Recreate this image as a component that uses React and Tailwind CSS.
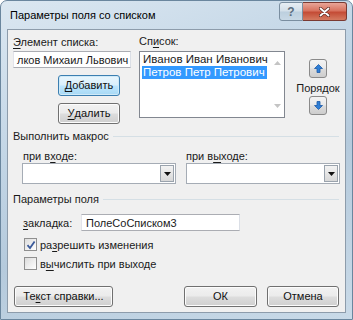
import React from "react";

const font = { fontFamily: '"Liberation Sans", Arial, sans-serif' };

function Btn({ children, className = "", focused = false }) {
  return (
    <div
      className={
        "flex items-center justify-center rounded-[3px] border text-[11px] leading-none text-[#111] " +
        (focused
          ? "border-[#3c7fb1] bg-[linear-gradient(#eaf6fd_0%,#d9f0fc_48%,#bee6fd_52%,#a7d9f5_100%)] shadow-[inset_0_0_0_1px_#cfeaf8] "
          : "border-[#707070] bg-[linear-gradient(#f2f2f2_0%,#ebebeb_48%,#dddddd_52%,#cfcfcf_100%)] shadow-[inset_0_0_0_1px_#fcfcfc] ") +
        className
      }
    >
      {children}
    </div>
  );
}

function U({ children }) {
  return <span className="underline underline-offset-2">{children}</span>;
}

function Combo({ className = "" }) {
  return (
    <div className={"flex h-[21px] border border-[#a5acb5] bg-white " + className}>
      <div className="flex-1" />
      <div className="m-[1px] flex w-[14px] items-center justify-center border border-[#9aa3ad] bg-[linear-gradient(#f3f3f3,#d8d8d8)]">
        <svg width="7" height="4" viewBox="0 0 7 4">
          <polygon points="0,0 7,0 3.5,4" fill="#111" />
        </svg>
      </div>
    </div>
  );
}

function ArrowBtn({ up }) {
  return (
    <div className="flex h-[19px] w-[18px] items-center justify-center rounded-[3px] border border-[#8a8a8a] bg-[linear-gradient(#f4f4f4_0%,#e9e9e9_48%,#dcdcdc_52%,#cdcdcd_100%)]">
      <svg width="9" height="9" viewBox="0 0 9 9" style={{ transform: up ? "none" : "rotate(180deg)" }}>
        <polygon points="4.5,0.5 8.5,4.5 6,4.5 6,8.5 3,8.5 3,4.5 0.5,4.5" fill="#2f7fd6" stroke="#1d5aa8" strokeWidth="0.8" />
      </svg>
    </div>
  );
}

function Check({ checked }) {
  return (
    <div className="flex h-[13px] w-[13px] items-center justify-center border border-[#8f8f8f] bg-[linear-gradient(135deg,#dcdcdc,#ffffff)]">
      {checked && (
        <svg width="10" height="10" viewBox="0 0 10 10">
          <path d="M1.5 5.2 L4 8 L8.6 1.5" fill="none" stroke="#3b5a9a" strokeWidth="1.8" />
        </svg>
      )}
    </div>
  );
}

export default function App() {
  return (
    <div style={font} className="h-[320px] w-[353px] overflow-hidden bg-white">
      <div className="flex h-[320px] w-[353px] flex-col rounded-t-[7px] border border-[#6a869e] bg-[linear-gradient(160deg,#dbe7f1_0%,#c3d6e6_35%,#b5cadc_60%,#c9dae8_100%)]">
        <div className="flex h-[28px] items-start">
          <div className="mt-[7px] ml-[9px] flex-1 text-[11px] leading-[14px] text-black">
            Параметры поля со списком
          </div>
          <div className="mt-[1px] flex h-[19px]">
            <div className="flex w-[24px] items-center justify-center rounded-l-[3px] border border-[#7a8ea0] bg-[linear-gradient(#e7eef4_0%,#d3dfe9_48%,#bccfde_52%,#c8d8e5_100%)] text-[12px] font-bold leading-none text-[#5c6e80]">
              ?
            </div>
            <div className="mr-[5px] flex w-[44px] items-center justify-center rounded-r-[3px] border border-l-0 border-[#7a3a32] bg-[linear-gradient(#e8a598_0%,#d8735f_45%,#c44c36_55%,#d47a60_100%)]">
              <svg width="11" height="10" viewBox="0 0 11 10">
                <path d="M1.5 1.5 L9.5 8.5 M9.5 1.5 L1.5 8.5" stroke="#5a2a22" strokeWidth="3.2" strokeLinecap="round" />
                <path d="M1.5 1.5 L9.5 8.5 M9.5 1.5 L1.5 8.5" stroke="#ffffff" strokeWidth="1.8" strokeLinecap="round" />
              </svg>
            </div>
          </div>
        </div>

        <div className="ml-[6px] flex h-[284px] w-[339px] flex-col border border-[#8d9cab] bg-[#f0f0f0] text-[11px] leading-[14px] text-[#1a1a1a]">
          {/* top block */}
          <div className="flex h-[92px] items-start">
            <div className="ml-[5px] flex w-[118px] flex-col">
              <div className="mt-[5px] h-[14px]">
                <U>Э</U>лемент списка:
              </div>
              <div className="mt-[2px] flex h-[17px] items-center overflow-hidden whitespace-nowrap border border-[#abadb3] border-r-[#dbdfe6] border-l-[#e2e3ea] bg-white pl-[3px]">
                лков Михаил Львович
              </div>
              <Btn focused className="mt-[7px] ml-[45px] h-[21px] w-[62px]">
                <U>Д</U>обавить
              </Btn>
              <Btn className="mt-[7px] ml-[45px] h-[21px] w-[62px]">
                <U>У</U>далить
              </Btn>
            </div>
            <div className="ml-[8px] flex w-[146px] flex-col">
              <div className="mt-[4px] h-[14px]">
                Сп<U>и</U>сок:
              </div>
              <div className="mt-[3px] flex h-[67px] border border-[#828790] bg-white text-[11.5px]">
                <div className="flex flex-1 flex-col pt-[1px] pl-[2px]">
                  <div className="h-[13px] whitespace-nowrap pl-[1px] leading-[13px]">Иванов Иван Иванович</div>
                  <div className="mr-[3px] h-[13px] whitespace-nowrap bg-[#3399ff] pl-[1px] leading-[13px] text-white">Петров Петр Петрович</div>
                </div>
                <div className="flex w-[14px] flex-col items-center justify-between py-[9px]">
                  <svg width="7" height="4" viewBox="0 0 7 4">
                    <polygon points="3.5,0 7,4 0,4" fill="#c4c4c4" />
                  </svg>
                  <svg width="7" height="4" viewBox="0 0 7 4">
                    <polygon points="0,0 7,0 3.5,4" fill="#c4c4c4" />
                  </svg>
                </div>
              </div>
            </div>
            <div className="ml-[10px] flex w-[46px] flex-col items-center">
              <div className="mt-[29px]">
                <ArrowBtn up />
              </div>
              <div className="mt-[3px] h-[14px]">Порядок</div>
              <div className="mt-[1px]">
                <ArrowBtn />
              </div>
            </div>
          </div>

          {/* Выполнить макрос */}
          <div className="mt-[7px] flex h-[14px] items-center">
            <div className="ml-[5px]">Выполнить макрос</div>
            <div className="mr-[6px] ml-[4px] h-px flex-1 bg-[#d5dfe5]" />
          </div>
          <div className="mt-[6px] flex h-[14px]">
            <div className="ml-[15px] w-[163px]">
              при в<U>х</U>оде:
            </div>
            <div>
              при в<U>ы</U>ходе:
            </div>
          </div>
          <div className="flex">
            <Combo className="ml-[14px] w-[154px]" />
            <Combo className="ml-[10px] w-[154px]" />
          </div>

          {/* Параметры поля */}
          <div className="mt-[8px] flex h-[14px] items-center">
            <div className="ml-[5px]">Параметры поля</div>
            <div className="mr-[6px] ml-[4px] h-px flex-1 bg-[#d5dfe5]" />
          </div>
          <div className="mt-[8px] flex h-[17px] items-center">
            <div className="ml-[15px] w-[58px]">
              <U>з</U>акладка:
            </div>
            <div className="flex h-[17px] w-[159px] items-center border border-[#abadb3] border-r-[#dbdfe6] border-l-[#e2e3ea] bg-white pl-[4px]">
              ПолеСоСписком3
            </div>
          </div>
          <div className="mt-[7px] ml-[16px] flex h-[13px] items-center gap-[3px]">
            <Check checked />
            <div>
              ра<U>з</U>решить изменения
            </div>
          </div>
          <div className="mt-[6px] ml-[16px] flex h-[13px] items-center gap-[3px]">
            <Check />
            <div>
              в<U>ы</U>числить при выходе
            </div>
          </div>

          <div className="mt-[16px] flex h-[21px]">
            <Btn className="ml-[6px] w-[99px]">
              Те<U>к</U>ст справки...
            </Btn>
            <Btn className="ml-[71px] w-[73px]">ОК</Btn>
            <Btn className="ml-[10px] w-[72px]">Отмена</Btn>
          </div>
        </div>
      </div>
    </div>
  );
}
